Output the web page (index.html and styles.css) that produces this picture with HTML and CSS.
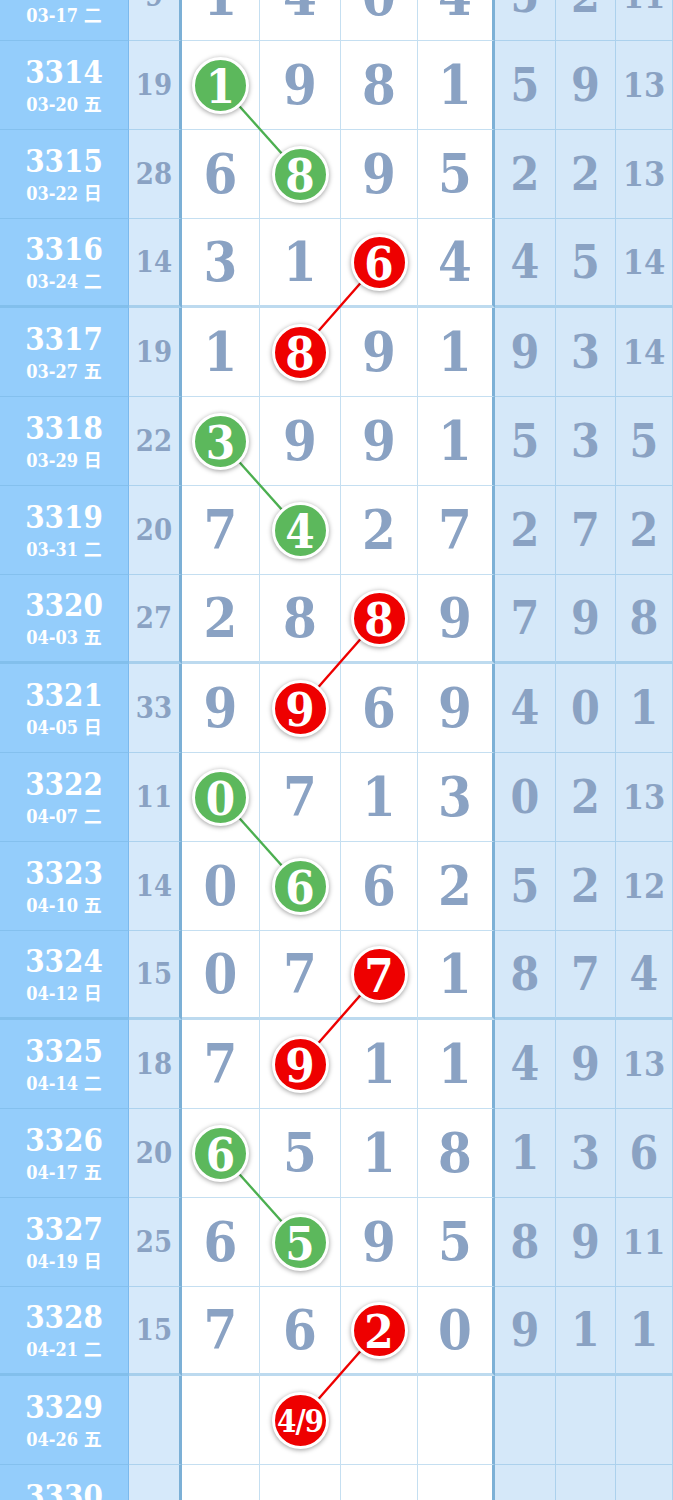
FILE: index.html
```html
<!DOCTYPE html>
<html lang="zh">
<head>
    <meta charset="UTF-8">
    <meta name="viewport" content="width=device-width, initial-scale=1.0">
    <title>走势图</title>
    <link rel="stylesheet" href="styles.css">
</head>
<body>
    <div class="chart">
        <!-- connector lines between the picked balls -->
        <svg class="links" width="673" height="1602" viewBox="0 0 673 1602">
            <line class="green" x1="220.5" y1="133" x2="300" y2="222"></line>
            <line class="red" x1="379" y1="310" x2="300" y2="400"></line>
            <line class="green" x1="220.5" y1="489" x2="300" y2="578"></line>
            <line class="red" x1="379" y1="666" x2="300" y2="756"></line>
            <line class="green" x1="220.5" y1="845" x2="300" y2="934"></line>
            <line class="red" x1="379" y1="1022" x2="300" y2="1112"></line>
            <line class="green" x1="220.5" y1="1201" x2="300" y2="1290"></line>
            <line class="red" x1="379" y1="1378" x2="300" y2="1468"></line>
        </svg>

        <div class="row">
            <div class="issue"><span class="no">3313</span><span class="date">03-17 二</span></div>
            <div class="sum">9</div>
            <div class="num">1</div><div class="num">4</div><div class="num">0</div><div class="num last">4</div>
            <div class="stat">5</div><div class="stat">2</div><div class="stat small">11</div>
        </div>
        <div class="row">
            <div class="issue"><span class="no">3314</span><span class="date">03-20 五</span></div>
            <div class="sum">19</div>
            <div class="num"><span class="ball green">1</span></div><div class="num">9</div><div class="num">8</div><div class="num last">1</div>
            <div class="stat">5</div><div class="stat">9</div><div class="stat small">13</div>
        </div>
        <div class="row">
            <div class="issue"><span class="no">3315</span><span class="date">03-22 日</span></div>
            <div class="sum">28</div>
            <div class="num">6</div><div class="num"><span class="ball green">8</span></div><div class="num">9</div><div class="num last">5</div>
            <div class="stat">2</div><div class="stat">2</div><div class="stat small">13</div>
        </div>
        <div class="row group-end">
            <div class="issue"><span class="no">3316</span><span class="date">03-24 二</span></div>
            <div class="sum">14</div>
            <div class="num">3</div><div class="num">1</div><div class="num"><span class="ball red">6</span></div><div class="num last">4</div>
            <div class="stat">4</div><div class="stat">5</div><div class="stat small">14</div>
        </div>

        <div class="row">
            <div class="issue"><span class="no">3317</span><span class="date">03-27 五</span></div>
            <div class="sum">19</div>
            <div class="num">1</div><div class="num"><span class="ball red">8</span></div><div class="num">9</div><div class="num last">1</div>
            <div class="stat">9</div><div class="stat">3</div><div class="stat small">14</div>
        </div>
        <div class="row">
            <div class="issue"><span class="no">3318</span><span class="date">03-29 日</span></div>
            <div class="sum">22</div>
            <div class="num"><span class="ball green">3</span></div><div class="num">9</div><div class="num">9</div><div class="num last">1</div>
            <div class="stat">5</div><div class="stat">3</div><div class="stat">5</div>
        </div>
        <div class="row">
            <div class="issue"><span class="no">3319</span><span class="date">03-31 二</span></div>
            <div class="sum">20</div>
            <div class="num">7</div><div class="num"><span class="ball green">4</span></div><div class="num">2</div><div class="num last">7</div>
            <div class="stat">2</div><div class="stat">7</div><div class="stat">2</div>
        </div>
        <div class="row group-end">
            <div class="issue"><span class="no">3320</span><span class="date">04-03 五</span></div>
            <div class="sum">27</div>
            <div class="num">2</div><div class="num">8</div><div class="num"><span class="ball red">8</span></div><div class="num last">9</div>
            <div class="stat">7</div><div class="stat">9</div><div class="stat">8</div>
        </div>

        <div class="row">
            <div class="issue"><span class="no">3321</span><span class="date">04-05 日</span></div>
            <div class="sum">33</div>
            <div class="num">9</div><div class="num"><span class="ball red">9</span></div><div class="num">6</div><div class="num last">9</div>
            <div class="stat">4</div><div class="stat">0</div><div class="stat">1</div>
        </div>
        <div class="row">
            <div class="issue"><span class="no">3322</span><span class="date">04-07 二</span></div>
            <div class="sum">11</div>
            <div class="num"><span class="ball green">0</span></div><div class="num">7</div><div class="num">1</div><div class="num last">3</div>
            <div class="stat">0</div><div class="stat">2</div><div class="stat small">13</div>
        </div>
        <div class="row">
            <div class="issue"><span class="no">3323</span><span class="date">04-10 五</span></div>
            <div class="sum">14</div>
            <div class="num">0</div><div class="num"><span class="ball green">6</span></div><div class="num">6</div><div class="num last">2</div>
            <div class="stat">5</div><div class="stat">2</div><div class="stat small">12</div>
        </div>
        <div class="row group-end">
            <div class="issue"><span class="no">3324</span><span class="date">04-12 日</span></div>
            <div class="sum">15</div>
            <div class="num">0</div><div class="num">7</div><div class="num"><span class="ball red">7</span></div><div class="num last">1</div>
            <div class="stat">8</div><div class="stat">7</div><div class="stat">4</div>
        </div>

        <div class="row">
            <div class="issue"><span class="no">3325</span><span class="date">04-14 二</span></div>
            <div class="sum">18</div>
            <div class="num">7</div><div class="num"><span class="ball red">9</span></div><div class="num">1</div><div class="num last">1</div>
            <div class="stat">4</div><div class="stat">9</div><div class="stat small">13</div>
        </div>
        <div class="row">
            <div class="issue"><span class="no">3326</span><span class="date">04-17 五</span></div>
            <div class="sum">20</div>
            <div class="num"><span class="ball green">6</span></div><div class="num">5</div><div class="num">1</div><div class="num last">8</div>
            <div class="stat">1</div><div class="stat">3</div><div class="stat">6</div>
        </div>
        <div class="row">
            <div class="issue"><span class="no">3327</span><span class="date">04-19 日</span></div>
            <div class="sum">25</div>
            <div class="num">6</div><div class="num"><span class="ball green">5</span></div><div class="num">9</div><div class="num last">5</div>
            <div class="stat">8</div><div class="stat">9</div><div class="stat small">11</div>
        </div>
        <div class="row group-end">
            <div class="issue"><span class="no">3328</span><span class="date">04-21 二</span></div>
            <div class="sum">15</div>
            <div class="num">7</div><div class="num">6</div><div class="num"><span class="ball red">2</span></div><div class="num last">0</div>
            <div class="stat">9</div><div class="stat">1</div><div class="stat">1</div>
        </div>

        <div class="row">
            <div class="issue"><span class="no">3329</span><span class="date">04-26 五</span></div>
            <div class="sum"></div>
            <div class="num"></div><div class="num"><span class="ball red pair">4/9</span></div><div class="num"></div><div class="num last"></div>
            <div class="stat"></div><div class="stat"></div><div class="stat"></div>
        </div>
        <div class="row">
            <div class="issue"><span class="no">3330</span><span class="date">04-28 日</span></div>
            <div class="sum"></div>
            <div class="num"></div><div class="num"></div><div class="num"></div><div class="num last"></div>
            <div class="stat"></div><div class="stat"></div><div class="stat"></div>
        </div>
    </div>
</body>
</html>
```

FILE: styles.css
```css
/* General */
body {
    margin: 0;
    background: #ffffff;
    font-family: "DejaVu Serif", "Noto Sans CJK SC", serif;
    font-stretch: condensed;
    font-weight: bold;
    overflow: hidden;
}

/* Chart (scrolled a little, first row is cut at the top) */
.chart {
    position: relative;
    margin-top: -48px;
}

.links {
    position: absolute;
    top: 0;
    left: 0;
    z-index: 1;
    pointer-events: none;
}

.links line {
    stroke-width: 2.4;
}

.links .green {
    stroke: #4caf50;
}

.links .red {
    stroke: #ee0000;
}

/* Rows */
.row {
    display: grid;
    grid-template-columns: 129px 53px 78px 81px 77px 77px 61px 60px 57px;
    height: 89px;
}

.row > div {
    display: flex;
    align-items: center;
    justify-content: center;
    box-sizing: border-box;
    border-bottom: 1px solid rgba(110, 175, 220, 0.4);
    border-right: 1px solid rgba(110, 175, 220, 0.4);
    color: #8aa2c3;
    line-height: 1;
}

.row.group-end > div {
    border-bottom: 3px solid rgba(110, 175, 220, 0.45);
}

/* Issue column */
.issue {
    flex-direction: column;
    background-color: #94cdfb;
}

.row > .issue {
    color: #ffffff;
    border-right-color: rgba(70, 140, 200, 0.3);
}

.issue .no {
    font-size: 31px;
}

.issue .date {
    font-size: 18px;
    margin-top: 8px;
}

/* Sum column */
.row > .sum {
    background-color: #d6e9fa;
    font-size: 29px;
    border-right: 3px solid #7cb0d6;
}

/* Digit columns */
.num {
    font-size: 54px;
}

.row > .num.last {
    border-right: 3px solid #7cb0d6;
}

/* Stat columns */
.stat {
    background-color: #d5e8f9;
    font-size: 46px;
}

.stat.small {
    font-size: 34px;
}

/* Balls */
.ball {
    position: relative;
    z-index: 2;
    display: flex;
    align-items: center;
    justify-content: center;
    width: 57px;
    height: 57px;
    box-sizing: border-box;
    border: 3px solid #ffffff;
    border-radius: 50%;
    box-shadow: 0 1px 5px rgba(0, 0, 0, 0.4);
    color: #ffffff;
    font-size: 47px;
    padding-top: 2px;
}

.ball.green {
    background-color: #5cb85c;
}

.ball.red {
    background-color: #ee0000;
}

.ball.pair {
    font-size: 31px;
    letter-spacing: -1px;
}
```
